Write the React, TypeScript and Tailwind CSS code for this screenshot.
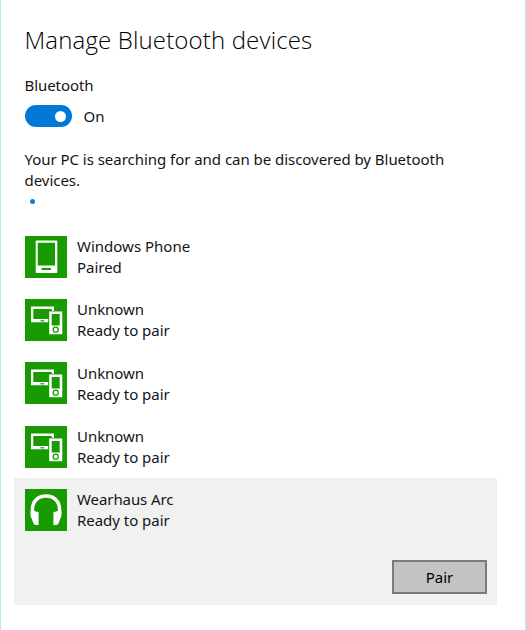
import type { ReactNode } from "react";

type Kind = "phone" | "unknown" | "headphones";

const devices: { name: string; status: string; kind: Kind; nameClass: string }[] = [
  { name: "Windows Phone", status: "Paired", kind: "phone", nameClass: "tracking-[0px]" },
  { name: "Unknown", status: "Ready to pair", kind: "unknown", nameClass: "tracking-[-0.05px]" },
  { name: "Unknown", status: "Ready to pair", kind: "unknown", nameClass: "tracking-[-0.05px]" },
  { name: "Unknown", status: "Ready to pair", kind: "unknown", nameClass: "tracking-[-0.05px]" },
  { name: "Wearhaus Arc", status: "Ready to pair", kind: "headphones", nameClass: "tracking-[-0.08px]" },
];

const glyphs: Record<Kind, ReactNode> = {
  phone: (
    <>
      <path fillRule="evenodd" fill="#fff" d="M11.700 4.500h19.600a1 1 0 0 1 1 1v30.500a1 1 0 0 1-1 1H11.700a1 1 0 0 1-1-1V5.500a1 1 0 0 1 1-1zM12.700 6.700v22.800h17.300V6.700z" />
      <path fill="#189b00" d="M16.500 32h9.500v2h-9.500z" />
    </>
  ),
  unknown: (
    <>
      <path fillRule="evenodd" fill="#fff" d="M6 7.500h23v4.200h-2.300v-1.700H8.300v9.900h14.900v3.400H6z" />
      <path fill="#189b00" d="M15.500 21.200h3.600v1.200h-3.600z" />
      <path fillRule="evenodd" fill="#fff" d="M24.200 12.500h13.100v22.700h-13.100zM26.700 15v11.500h8v-11.500z" />
      <circle cx="30.700" cy="30.700" r="2.500" fill="none" stroke="#189b00" strokeWidth="1.300" />
    </>
  ),
  headphones: (
    <>
      <path fill="none" stroke="#fff" strokeWidth="3.500" d="M7.400 25V20.500C7.400 12.200 13 7.100 21 7.100S34.600 12.200 34.600 20.500V25" />
      <path fill="#fff" d="M5.700 22h4.500l.8.700h1.200c.9 0 1.400.5 1.400 1.400V36H11c-1.500 0-2.200-.8-2.700-2.200L5.600 27zM36.300 22h-4.500l-.8.700h-1.200c-.9 0-1.400.5-1.400 1.400V36H31c1.500 0 2.200-.8 2.700-2.200L36.400 27z" />
    </>
  ),
};

function DeviceIcon({ kind }: { kind: Kind }) {
  return (
    <svg className="block h-[42px] w-[42px] shrink-0 bg-[#189b00]" viewBox="0 0 42 42" aria-hidden="true">
      {glyphs[kind]}
    </svg>
  );
}

export default function App() {
  return (
    <main className="h-[630px] w-[526px] border-x border-[#b9eaf0] bg-white font-['Noto_Sans','Open_Sans',sans-serif] text-[15px] leading-[21px] text-[#151515]">
      <header className="pt-[22px] pl-[23.500px]">
        <h1 className="h-[36px] whitespace-nowrap font-['Open_Sans','Noto_Sans',sans-serif] text-[24px] leading-[36px] font-light tracking-[0.15px] text-black">
          <span>Manage Bluetooth devices</span>
        </h1>
        <div className="mt-[17px] tracking-[-0.06px]"><span>Bluetooth</span></div>
        <div className="mt-[9px] flex h-[22px] items-center">
          <button aria-label="Bluetooth" className="flex h-[21.500px] w-[47px] items-center justify-end rounded-full bg-[#0078d7] pr-[5.600px]">
            <span className="h-[11px] w-[11px] rounded-full bg-white" />
          </button>
          <span className="ml-3">On</span>
        </div>
        <p className="mt-[22px] whitespace-nowrap tracking-[-0.035px]">
          <span>Your PC is searching for and can be discovered by Bluetooth</span>
          <br />
          <span>devices.</span>
        </p>
        <div className="mt-[8px] ml-[5.500px] h-[5px] w-[5px] rounded-full bg-[#0882dc]" />
      </header>
      <ul className="mt-[20.900px] ml-[13px] w-[483px]">
        {devices.map((d, i) => (
          <li key={i} className={i === 4 ? "h-[126.700px] bg-[#f1f1f1]" : "h-[63.350px]"}>
            <div className="flex pt-[10.700px] pl-[10.500px]">
              <DeviceIcon kind={d.kind} />
              <div className="ml-[10.500px] pt-[0.400px] whitespace-nowrap">
                <div><span className={d.nameClass}>{d.name}</span></div>
                <div><span className="tracking-[-0.03px]">{d.status}</span></div>
              </div>
            </div>
            {i === 4 && (
              <div className="mt-[28.600px] flex justify-end pr-[10px]">
                <button className="h-[34px] w-[95px] border-2 border-[#7a7a7a] bg-[#c3c3c3] pt-[1.500px] text-black">Pair</button>
              </div>
            )}
          </li>
        ))}
      </ul>
    </main>
  );
}
